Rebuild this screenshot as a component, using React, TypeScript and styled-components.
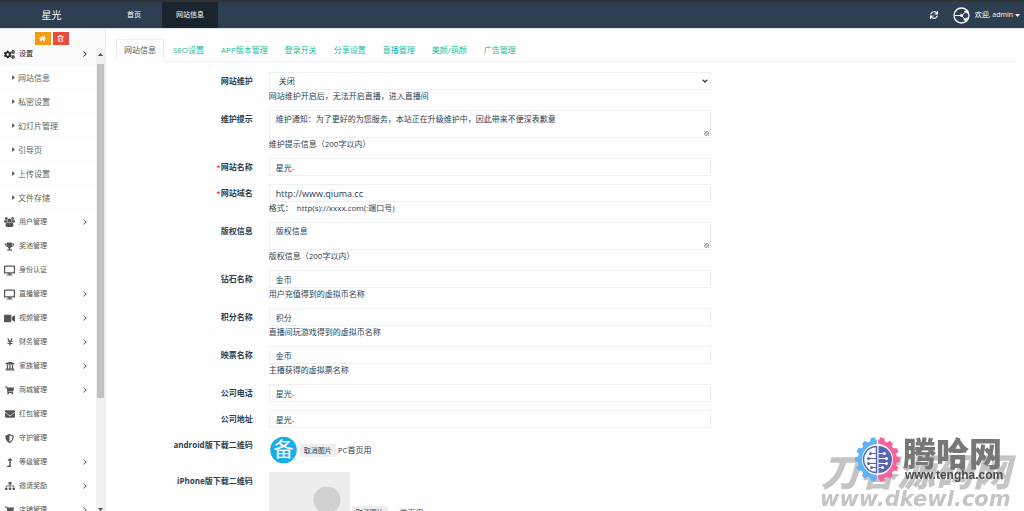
import React, { useLayoutEffect, useRef } from "react";
import styled, { createGlobalStyle } from "styled-components";
import {
  FaHome, FaCogs, FaTrophy, FaDesktop, FaVideo, FaYenSign, FaUniversity,
  FaShoppingCart, FaEnvelope, FaShieldAlt, FaLevelUpAlt, FaSitemap, FaSync, FaRegTrashAlt,
} from "react-icons/fa";

const GlobalStyle = createGlobalStyle`
  *, *::before, *::after { box-sizing: border-box; }
  body {
    margin: 0;
    color: #2c3e50;
    background: #fff;
    font: 8px/12px "Open Sans", "Noto Sans CJK SC", sans-serif;
  }
  button, input, select, textarea { font: inherit; color: inherit; margin: 0; }
  ul { list-style: none; margin: 0; padding: 0; }
  a { color: inherit; text-decoration: none; }
`;

const Page = styled.div`
  height: 100vh;
  display: flex;
  flex-direction: column;
  overflow: hidden;
`;

const Header = styled.header`
  flex: none;
  display: flex;
  height: 29px;
  border-top: 2px solid #333;
  border-bottom: 1px solid #dfe3e7;
  background: #2c3e50;
  color: #fff;
  font-size: 7px;
`;

const Brand = styled.a`
  width: 103px;
  font-size: 10px;
  line-height: 26px;
  text-align: center;
`;

const TopNav = styled.nav`
  display: flex;
  flex: 1;
  margin-left: 3px;
`;

const TopLink = styled.a<{ $active?: boolean }>`
  min-width: 56px;
  line-height: 26px;
  text-align: center;
  background: ${(p) => (p.$active ? "#1a242f" : "transparent")};
`;

const UserArea = styled.div`
  display: flex;
  align-items: center;
  gap: 15px;
  padding-right: 4px;
`;

const PlainButton = styled.button`
  display: flex;
  align-items: center;
  padding: 0;
  border: 0;
  background: none;
`;

const UserButton = styled(PlainButton)`
  gap: 2px;
  svg:first-child { margin-right: 3px; }
`;

const Body = styled.div`
  flex: 1;
  min-height: 0;
  display: flex;
`;

const Sidebar = styled.aside`
  flex: none;
  width: 106px;
  display: flex;
  flex-direction: column;
  border-right: 1px solid #eee;
  font-size: 7px;
`;

const Shortcuts = styled.div`
  flex: none;
  display: flex;
  justify-content: center;
  gap: 2px;
  height: 20px;
  padding: 3px 2px 4px 0;
  background: #fafafa;
`;

const Shortcut = styled.button<{ $color: string }>`
  display: flex;
  align-items: center;
  justify-content: center;
  width: 16px;
  padding: 0;
  border: 0;
  color: #fff;
  background: ${(p) => p.$color};
`;

const MenuFrame = styled.div`
  flex: 1;
  min-height: 0;
  display: flex;
`;

const Menu = styled.nav`
  flex: 1;
  overflow-y: scroll;
  scrollbar-width: none;
`;

const MenuLink = styled.a<{ $open?: boolean }>`
  display: flex;
  align-items: center;
  height: 24px;
  padding: 0 9px 0 4px;
  color: ${(p) => (p.$open ? "#222" : "#555")};
  background: ${(p) => (p.$open ? "#fafafa" : "transparent")};
  span { flex: 1; }
`;

const MenuIcon = styled.i`
  display: flex;
  justify-content: center;
  width: 11px;
  margin-right: 4px;
`;

const SubLink = styled.a`
  display: flex;
  align-items: center;
  gap: 3px;
  height: 24px;
  padding-left: 12px;
  border-bottom: 1px solid #fafafa;
  font-size: 8px;
  color: #616161;
`;

const ScrollBar = styled.div`
  flex: none;
  width: 9px;
  display: flex;
  flex-direction: column;
  align-items: center;
  padding: 4px 1px 0;
  background: #f1f1f1;
  color: #505050;
`;

const ScrollThumb = styled.div`
  flex: 0 0 73%;
  width: 100%;
  margin: 8px 0 auto;
  background: #c1c1c1;
`;

const Main = styled.main`
  flex: 1;
  min-width: 0;
  overflow: hidden;
  padding: 10px 8px 0 10px;
`;

const Tabs = styled.ul`
  display: flex;
  gap: 1px;
  border-bottom: 1px solid #ecf0f1;
`;

const Tab = styled.a<{ $active?: boolean }>`
  display: block;
  height: 23px;
  margin-bottom: -1px;
  padding: 0 7px;
  border: 1px solid ${(p) => (p.$active ? "#ecf0f1" : "transparent")};
  border-bottom-color: ${(p) => (p.$active ? "#fff" : "transparent")};
  line-height: 20px;
  color: ${(p) => (p.$active ? "#555" : "#18bc9c")};
`;

const Form = styled.form`
  display: flex;
  flex-direction: column;
  gap: 8px;
  margin: 10px -8px 0;
`;

const Row = styled.div`
  display: grid;
  grid-template-columns: 2fr 6fr 4fr;
`;

const Label = styled.label`
  padding: 0 8px;
  line-height: 18px;
  font-weight: 700;
  text-align: right;
`;

const Required = styled.span`
  color: red;
  font-weight: 400;
`;

const Control = styled.div`
  padding: 0 8px;
  min-width: 0;
`;

const Help = styled.div`
  line-height: 12px;
  white-space: pre;
`;

const Input = styled.input<{ $large?: boolean }>`
  display: block;
  width: 100%;
  height: 18px;
  padding: 0 6px;
  border: 1px solid #ecf0f1;
  background: #fff;
  font-size: ${(p) => (p.$large ? "9px" : "8px")};
`;

const TextArea = styled.textarea`
  display: block;
  width: 100%;
  height: 28px;
  padding: 2px 6px;
  border: 1px solid #ecf0f1;
  resize: vertical;
  &::-webkit-resizer {
    background: repeating-linear-gradient(135deg, #aaa 0 1px, #fff 1px 2px) right 1px bottom 1px / 5px 5px no-repeat;
    clip-path: polygon(100% 50%, 100% 100%, 50% 100%);
  }
`;

const SelectWrap = styled.div`
  display: grid;
  align-items: center;
  > * { grid-area: 1 / 1; }
  svg { justify-self: end; margin-right: 3px; pointer-events: none; }
`;

const Select = styled.select`
  appearance: none;
  width: 100%;
  height: 18px;
  padding: 0 9px;
  border: 1px solid #ecf0f1;
  border-radius: 0;
  background: #fff;
`;

const Upload = styled.div`
  display: flex;
  align-items: center;
  gap: 2px;
`;

const CancelButton = styled.button`
  height: 13px;
  padding: 0 4px;
  border: 0;
  background: #eee;
  font-size: 7px;
  line-height: 13px;
`;

const Watermark = styled.div`
  position: fixed;
  right: 11px;
  bottom: 0;
  width: 194px;
  height: 76px;
  pointer-events: none;
  svg { display: block; overflow: visible; }
`;

function UsersIcon() {
  return (
    <svg width="11" height="10" viewBox="0 0 1920 1792" fill="currentColor">
      <path d="M593 896q-162 5-265 128H194q-82 0-138-40.500T0 865q0-353 124-353 6 0 43.500 21t97.500 42.500T384 597q67 0 133-23-5 37-5 66 0 139 81 256zm1071 637q0 120-73 189.500t-194 69.500H523q-121 0-194-69.500T256 1533q0-53 3.500-103.500t14-109T300 1212t43-97.500 62-81 85.500-53.500T602 960q10 0 43 21.500t73 48 107 48 135 21.500 135-21.500 107-48 73-48 43-21.500q61 0 111.500 20t85.500 53.500 62 81 43 97.500 26.500 108.500 14 109 3.500 103.500zM640 256q0 106-75 181t-181 75-181-75-75-181 75-181T384 0t181 75 75 181zm704 384q0 159-112.500 271.500T960 1024 688.500 911.500 576 640t112.500-271.500T960 256t271.500 112.500T1344 640zm576 225q0 78-56 118.500t-138 40.500h-134q-103-123-265-128 81-117 81-256 0-29-5-66 66 23 133 23 59 0 119-21.500t97.500-42.500 43.500-21q124 0 124 353zm-128-609q0 106-75 181t-181 75-181-75-75-181 75-181 181-75 181 75 75 181z" />
    </svg>
  );
}

function Angle() {
  return (
    <svg width="4" height="6" viewBox="0 0 4 6">
      <path d="M.5.5 3.200 3 .5 5.500" fill="none" stroke="currentColor" strokeWidth="1" />
    </svg>
  );
}

type Item = [React.ReactNode, string, boolean];

const menuItems: Item[] = [
  [<UsersIcon />, "用户管理", true],
  [<FaTrophy size={9} />, "奖池管理", false],
  [<FaDesktop size={11} />, "身份认证", false],
  [<FaDesktop size={11} />, "直播管理", true],
  [<FaVideo size={11} />, "视频管理", true],
  [<FaYenSign size={8} />, "财务管理", true],
  [<FaUniversity size={10} />, "家族管理", true],
  [<FaShoppingCart size={9} />, "商城管理", true],
  [<FaEnvelope size={10} />, "红包管理", false],
  [<FaShieldAlt size={9} />, "守护管理", false],
  [<FaLevelUpAlt size={9} />, "等级管理", true],
  [<FaSitemap size={10} />, "邀请奖励", true],
  [<FaShoppingCart size={9} />, "店铺管理", true],
];

const subItems = ["网站信息", "私密设置", "幻灯片管理", "引导页", "上传设置", "文件存储"];
const tabs = ["网站信息", "SEO设置", "APP版本管理", "登录开关", "分享设置", "直播管理", "美颜/萌颜", "广告管理"];

type FieldData = {
  id: string; label: string; value: string; help?: string;
  required?: boolean; kind?: "text" | "area" | "select"; large?: boolean;
};

const fields: FieldData[] = [
  { id: "maintain", label: "网站维护", value: "关闭", kind: "select", help: "网站维护开启后，无法开启直播，进入直播间" },
  { id: "tips", label: "维护提示", value: "维护通知：为了更好的为您服务，本站正在升级维护中，因此带来不便深表歉意", kind: "area", help: "维护提示信息（200字以内）" },
  { id: "name", label: "网站名称", value: "星光-", required: true },
  { id: "site", label: "网站域名", value: "http://www.qiuma.cc", required: true, large: true, help: "格式：  http(s)://xxxx.com(:端口号)" },
  { id: "copyright", label: "版权信息", value: "版权信息", kind: "area", help: "版权信息（200字以内）" },
  { id: "coin", label: "钻石名称", value: "金币", help: "用户充值得到的虚拟币名称" },
  { id: "score", label: "积分名称", value: "积分", help: "直播间玩游戏得到的虚拟币名称" },
  { id: "votes", label: "映票名称", value: "金币", help: "主播获得的虚拟票名称" },
  { id: "mobile", label: "公司电话", value: "星光-" },
  { id: "address", label: "公司地址", value: "星光-" },
];

function Field({ id, label, value, help, required, kind, large }: FieldData) {
  return (
    <Row>
      <Label htmlFor={id}>{required && <Required>*</Required>}{label}</Label>
      <Control>
        {kind === "select" ? (
          <SelectWrap>
            <Select id={id} defaultValue={value}><option>{value}</option></Select>
            <svg width="6" height="4" viewBox="0 0 6 4"><path d="M.7.7 3 3 5.300.7" fill="none" stroke="#2c3e50" strokeWidth="1.3" /></svg>
          </SelectWrap>
        ) : kind === "area" ? (
          <TextArea id={id} defaultValue={value} />
        ) : (
          <Input id={id} $large={large} defaultValue={value} />
        )}
        {help && <Help>{help}</Help>}
      </Control>
    </Row>
  );
}

function AvatarLogo() {
  return (
    <svg width="17" height="17" viewBox="0 0 34 34" fill="none" stroke="#fff">
      <circle cx="17" cy="17" r="15" strokeWidth="2.6" />
      <path d="M3 17h14L28 8M17 17l9 10" strokeWidth="2" />
      <circle cx="17" cy="17" r="2.500" fill="#fff" />
      <path d="m22 9 8-3v7zM21 25l8-4-2 8z" fill="#fff" />
    </svg>
  );
}

function RecordBadge() {
  return (
    <svg width="29" height="28" viewBox="0 0 29 28" role="img" aria-label="备">
      <circle cx="14.500" cy="14" r="13.300" fill="#1aabe9" />
      <text x="14.500" y="21" textAnchor="middle" fontSize="20" fontWeight="400" fill="#fff">备</text>
    </svg>
  );
}

function Placeholder() {
  return (
    <svg width="81" height="81" viewBox="0 0 81 81">
      <path d="M0 0h81v81H0z" fill="#ededed" />
      <circle cx="58" cy="28" r="13.500" fill="#d0d0d0" />
    </svg>
  );
}

const teeth = Array.from({ length: 14 }, (_, i) => (i + 0.5) * (360 / 14));

function GearHalf({ color, clip }: { color: string; clip: string }) {
  return (
    <g clipPath={`url(#${clip})`} fill={color}>
      <circle r="17.500" fill="none" stroke={color} strokeWidth="4" />
      {teeth.map((a) => (
        <path key={a} d="M-3.200-18.500-2-22.300H2L3.200-18.500z" transform={`rotate(${a})`} />
      ))}
    </g>
  );
}

function SiteMarks() {
  return (
    <Watermark>
      <svg width="194" height="76" viewBox="0 0 194 76">
        <defs>
          <clipPath id="left"><path d="M-24-24h23.300v48H-24z" /></clipPath>
          <clipPath id="right"><path d="M.7-24H24v48H.7z" /></clipPath>
        </defs>
        <g fill="#c4c4c4" fontWeight="900" fontStyle="italic">
          <text x="2" y="51" fontSize="38" fontFamily="'Noto Sans CJK SC', sans-serif">刀客源码网</text>
          <text x="1" y="71" fontSize="21" fontFamily="'DejaVu Sans', sans-serif">www.dkewl.com</text>
        </g>
        <g transform="translate(58.500 24.500)">
          <circle r="16" fill="#fff" opacity=".85" />
          <GearHalf color="#5cb3f5" clip="left" />
          <GearHalf color="#f4639c" clip="right" />
          <path d="M-1-13A13 13 0 0 0-1 13z" fill="#fff" stroke="#5a66b4" strokeWidth="1.500" />
          <path d="M1-13.500A13.500 13.500 0 0 1 1 13.500z" fill="#5a66b4" />
          <g fill="none" stroke="#5a66b4" strokeWidth="1.200"><path d="M-1-6h-6M-1-1h-9M-1 4h-9M-1 8h-5" /></g>
          <g fill="none" stroke="#fff" strokeWidth="1.200"><path d="M1-6h6M1-1h8M1 4h8M1 8h4" /></g>
          <g fill="#5a66b4"><circle cx="-7" cy="-6" r="1.500" /><circle cx="-9" cy="-1" r="1.500" /><circle cx="-9" cy="4" r="1.500" /><circle cx="-6" cy="8" r="1.500" /></g>
          <g fill="#fff"><circle cx="7" cy="-6" r="1.500" /><circle cx="9" cy="-1" r="1.500" /><circle cx="9" cy="4" r="1.500" /><circle cx="5" cy="8" r="1.500" /></g>
        </g>
        <text x="84" y="31" fontSize="33" fontWeight="900" fill="#777" fontFamily="'Noto Sans CJK SC', sans-serif">腾哈网</text>
        <text x="86" y="44" fontSize="12" fontWeight="700" fill="#4c4c4c" fontFamily="'Liberation Sans', sans-serif">www.tengha.com</text>
      </svg>
    </Watermark>
  );
}

export default function App() {
  const menu = useRef<HTMLElement>(null);
  useLayoutEffect(() => {
    if (menu.current) menu.current.scrollTop = 7;
  }, []);

  return (
    <Page>
      <GlobalStyle />
      <Header>
        <Brand href="#">星光</Brand>
        <TopNav>
          <TopLink href="#">首页</TopLink>
          <TopLink href="#" $active>网站信息</TopLink>
        </TopNav>
        <UserArea>
          <PlainButton aria-label="刷新"><FaSync size={8} /></PlainButton>
          <UserButton>
            <AvatarLogo />欢迎, admin
            <svg width="5" height="3" viewBox="0 0 5 3"><path d="M0 0h5L2.500 3z" fill="currentColor" /></svg>
          </UserButton>
        </UserArea>
      </Header>
      <Body>
        <Sidebar>
          <Shortcuts>
            <Shortcut $color="#f39c12" aria-label="首页"><FaHome size={7} /></Shortcut>
            <Shortcut $color="#e74c3c" aria-label="清除缓存"><FaRegTrashAlt size={7} /></Shortcut>
          </Shortcuts>
          <MenuFrame>
            <Menu ref={menu}>
              <MenuLink href="#" $open><MenuIcon><FaCogs size={11} /></MenuIcon><span>设置</span><Angle /></MenuLink>
              {subItems.map((s) => (
                <SubLink href="#" key={s}>
                  <svg width="3" height="5" viewBox="0 0 3 5"><path d="M0 0v5l3-2.500z" fill="currentColor" /></svg>
                  {s}
                </SubLink>
              ))}
              {menuItems.map(([icon, text, more]) => (
                <MenuLink href="#" key={text}><MenuIcon>{icon}</MenuIcon><span>{text}</span>{more && <Angle />}</MenuLink>
              ))}
            </Menu>
            <ScrollBar aria-hidden="true">
              <svg width="5" height="3" viewBox="0 0 5 3"><path d="M0 3h5L2.500 0z" fill="currentColor" /></svg>
              <ScrollThumb />
              <svg width="5" height="3" viewBox="0 0 5 3"><path d="M0 0h5L2.500 3z" fill="currentColor" /></svg>
            </ScrollBar>
          </MenuFrame>
        </Sidebar>
        <Main>
          <Tabs>
            {tabs.map((t, i) => <li key={t}><Tab href="#" $active={i === 0}>{t}</Tab></li>)}
          </Tabs>
          <Form>
            {fields.map((f) => <Field key={f.id} {...f} />)}
            <Row>
              <Label as="div">android版下载二维码</Label>
              <Control><Upload><RecordBadge /><CancelButton type="button">取消图片</CancelButton>PC首页用</Upload></Control>
            </Row>
            <Row>
              <Label as="div">iPhone版下载二维码</Label>
              <Control><Upload><Placeholder /><CancelButton type="button">取消图片</CancelButton>PC首页用</Upload></Control>
            </Row>
          </Form>
        </Main>
      </Body>
      <SiteMarks />
    </Page>
  );
}
